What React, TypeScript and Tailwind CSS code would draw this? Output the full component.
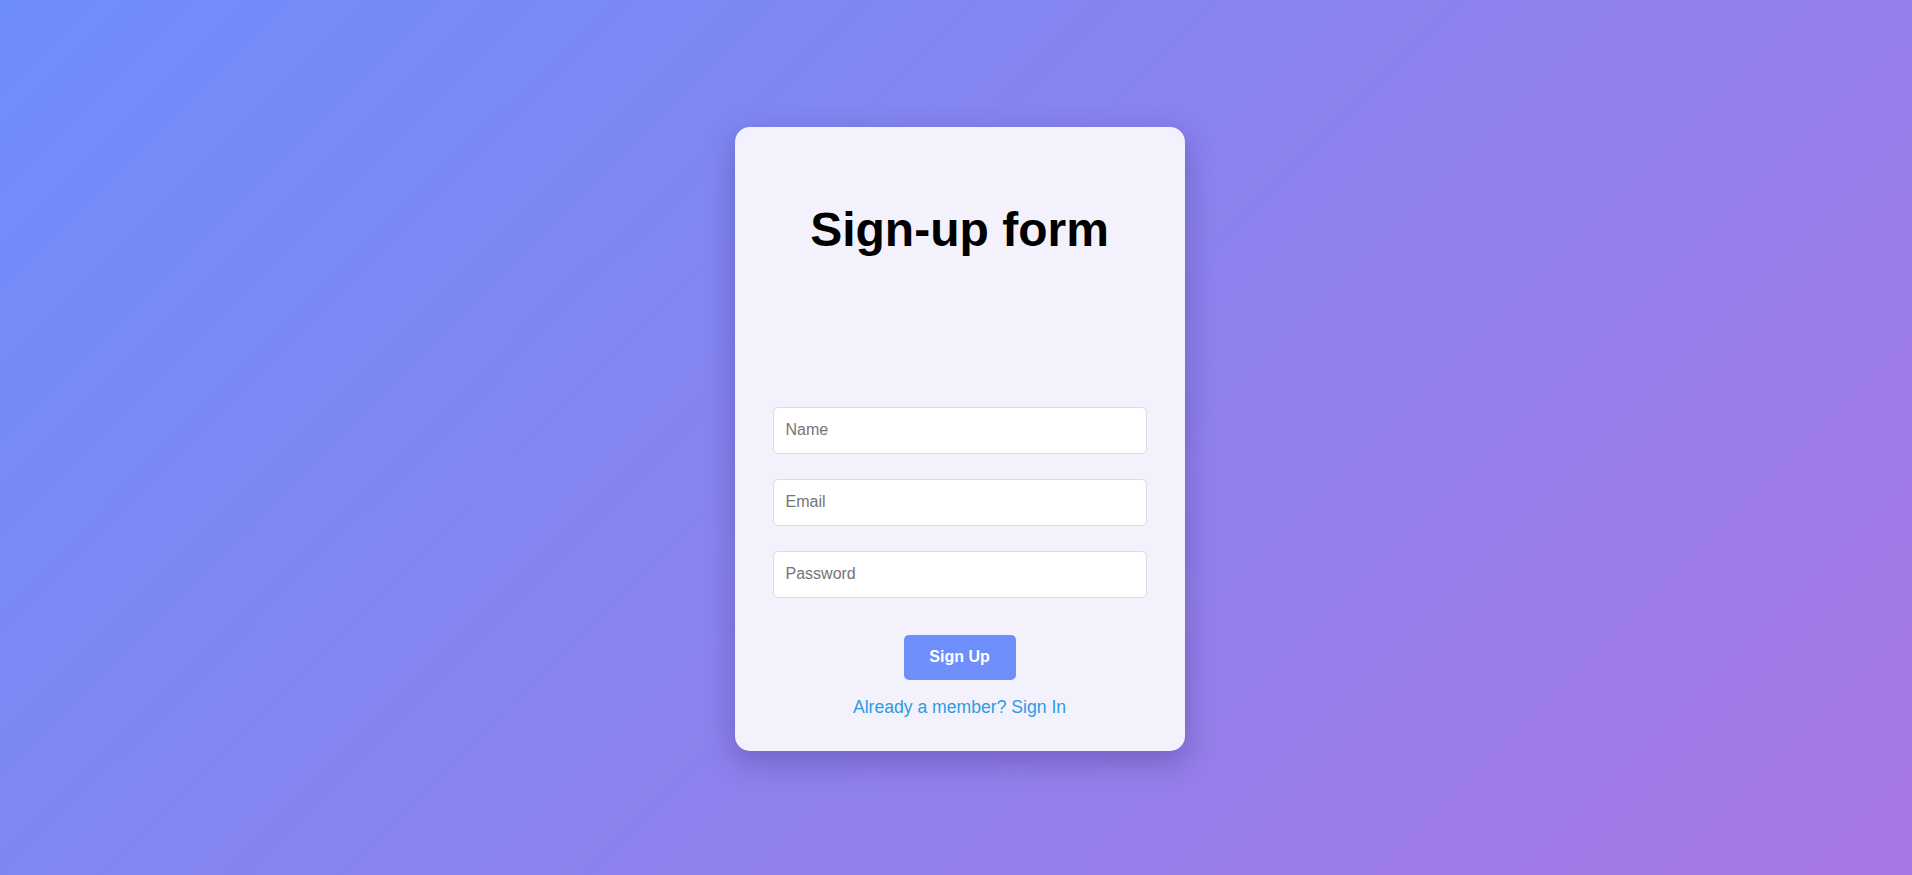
import { useState, FormEvent } from 'react';

export default function App() {
  const [name, setName] = useState('');
  const [email, setEmail] = useState('');
  const [password, setPassword] = useState('');

  const handleSubmit = (e: FormEvent) => {
    e.preventDefault();
  };

  return (
    <div
      className="min-h-screen flex items-center justify-center bg-[linear-gradient(135deg,#6e8efb_0%,#a777e3_100%)]"
      style={{ fontFamily: '"Liberation Sans", Arial, sans-serif' }}
    >
      <form
        onSubmit={handleSubmit}
        className="ml-[7px] mt-[2px] w-[450px] bg-[#f3f2fc] rounded-[15px] px-[38px] pt-[75px] pb-[34px] shadow-[0_10px_30px_rgba(40,20,90,0.3)] flex flex-col items-center"
      >
        <h1 className="text-[48px] leading-[55px] font-bold text-black text-center">Sign-up form</h1>

        <div className="w-full mt-[150px] flex flex-col gap-[25px]">
          <input
            type="text"
            value={name}
            onChange={e => setName(e.target.value)}
            placeholder="Name"
            className="w-full h-[47px] bg-white border border-[#dddddd] rounded-[5px] px-[12px] text-[16px] text-black placeholder-[#757575] focus:outline-none"
          />
          <input
            type="email"
            value={email}
            onChange={e => setEmail(e.target.value)}
            placeholder="Email"
            className="w-full h-[47px] bg-white border border-[#dddddd] rounded-[5px] px-[12px] text-[16px] text-black placeholder-[#757575] focus:outline-none"
          />
          <input
            type="password"
            value={password}
            onChange={e => setPassword(e.target.value)}
            placeholder="Password"
            className="w-full h-[47px] bg-white border border-[#dddddd] rounded-[5px] px-[12px] text-[16px] text-black placeholder-[#757575] focus:outline-none"
          />
        </div>

        <button
          type="submit"
          className="mt-[37px] w-[112px] h-[45px] bg-[#6e8efb] text-white font-bold text-[16px] rounded-[5px] cursor-pointer"
        >
          Sign Up
        </button>

        <a href="#" className="mt-[17px] text-[17.6px] leading-[20px] text-[#2f9ae0]">
          Already a member? Sign In
        </a>
      </form>
    </div>
  );
}
